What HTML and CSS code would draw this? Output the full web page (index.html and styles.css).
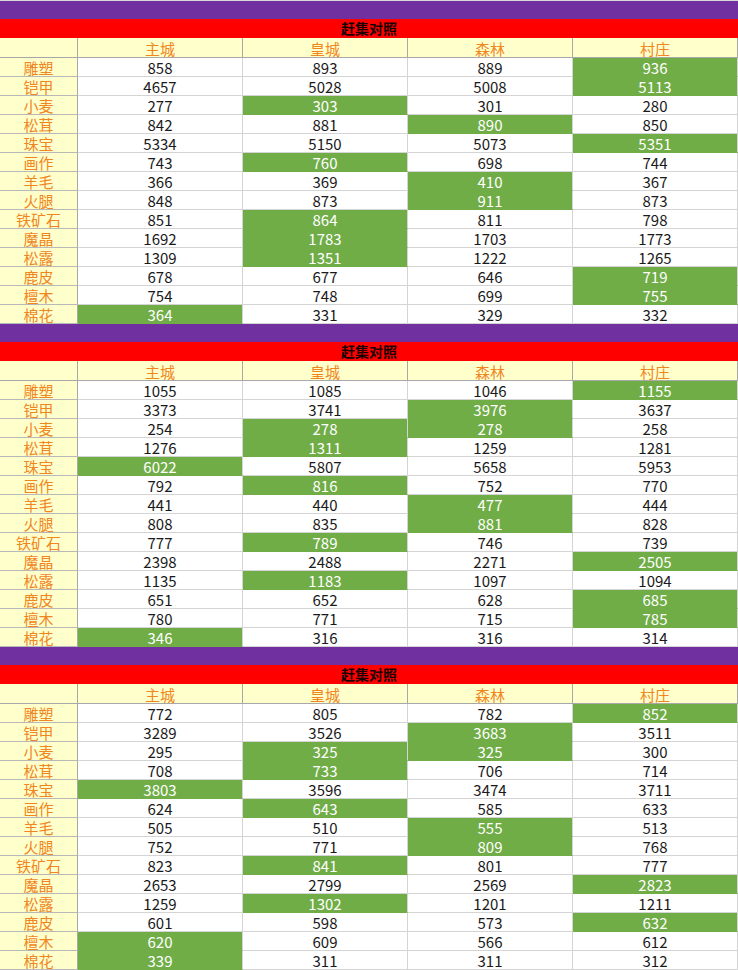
FILE: index.html
```html
<!DOCTYPE html>
<html lang="zh">
<head>
<meta charset="utf-8">
<title>赶集对照</title>
<link rel="stylesheet" href="styles.css">
</head>
<body>
<div class="sheet">

<section class="block">
  <div class="band-purple"></div>
  <div class="band-title">赶集对照</div>
  <div class="grid">
    <div class="cell hd"></div><div class="cell hd">主城</div><div class="cell hd">皇城</div><div class="cell hd">森林</div><div class="cell hd">村庄</div>
    <div class="cell lbl">雕塑</div><div class="cell">858</div><div class="cell">893</div><div class="cell">889</div><div class="cell hi">936</div>
    <div class="cell lbl">铠甲</div><div class="cell">4657</div><div class="cell">5028</div><div class="cell">5008</div><div class="cell hi">5113</div>
    <div class="cell lbl">小麦</div><div class="cell">277</div><div class="cell hi">303</div><div class="cell">301</div><div class="cell">280</div>
    <div class="cell lbl">松茸</div><div class="cell">842</div><div class="cell">881</div><div class="cell hi">890</div><div class="cell">850</div>
    <div class="cell lbl">珠宝</div><div class="cell">5334</div><div class="cell">5150</div><div class="cell">5073</div><div class="cell hi">5351</div>
    <div class="cell lbl">画作</div><div class="cell">743</div><div class="cell hi">760</div><div class="cell">698</div><div class="cell">744</div>
    <div class="cell lbl">羊毛</div><div class="cell">366</div><div class="cell">369</div><div class="cell hi">410</div><div class="cell">367</div>
    <div class="cell lbl">火腿</div><div class="cell">848</div><div class="cell">873</div><div class="cell hi">911</div><div class="cell">873</div>
    <div class="cell lbl">铁矿石</div><div class="cell">851</div><div class="cell hi">864</div><div class="cell">811</div><div class="cell">798</div>
    <div class="cell lbl">魔晶</div><div class="cell">1692</div><div class="cell hi">1783</div><div class="cell">1703</div><div class="cell">1773</div>
    <div class="cell lbl">松露</div><div class="cell">1309</div><div class="cell hi">1351</div><div class="cell">1222</div><div class="cell">1265</div>
    <div class="cell lbl">鹿皮</div><div class="cell">678</div><div class="cell">677</div><div class="cell">646</div><div class="cell hi">719</div>
    <div class="cell lbl">檀木</div><div class="cell">754</div><div class="cell">748</div><div class="cell">699</div><div class="cell hi">755</div>
    <div class="cell lbl">棉花</div><div class="cell hi">364</div><div class="cell">331</div><div class="cell">329</div><div class="cell">332</div>
  </div>
</section>

<section class="block">
  <div class="band-purple"></div>
  <div class="band-title">赶集对照</div>
  <div class="grid">
    <div class="cell hd"></div><div class="cell hd">主城</div><div class="cell hd">皇城</div><div class="cell hd">森林</div><div class="cell hd">村庄</div>
    <div class="cell lbl">雕塑</div><div class="cell">1055</div><div class="cell">1085</div><div class="cell">1046</div><div class="cell hi">1155</div>
    <div class="cell lbl">铠甲</div><div class="cell">3373</div><div class="cell">3741</div><div class="cell hi">3976</div><div class="cell">3637</div>
    <div class="cell lbl">小麦</div><div class="cell">254</div><div class="cell hi">278</div><div class="cell hi">278</div><div class="cell">258</div>
    <div class="cell lbl">松茸</div><div class="cell">1276</div><div class="cell hi">1311</div><div class="cell">1259</div><div class="cell">1281</div>
    <div class="cell lbl">珠宝</div><div class="cell hi">6022</div><div class="cell">5807</div><div class="cell">5658</div><div class="cell">5953</div>
    <div class="cell lbl">画作</div><div class="cell">792</div><div class="cell hi">816</div><div class="cell">752</div><div class="cell">770</div>
    <div class="cell lbl">羊毛</div><div class="cell">441</div><div class="cell">440</div><div class="cell hi">477</div><div class="cell">444</div>
    <div class="cell lbl">火腿</div><div class="cell">808</div><div class="cell">835</div><div class="cell hi">881</div><div class="cell">828</div>
    <div class="cell lbl">铁矿石</div><div class="cell">777</div><div class="cell hi">789</div><div class="cell">746</div><div class="cell">739</div>
    <div class="cell lbl">魔晶</div><div class="cell">2398</div><div class="cell">2488</div><div class="cell">2271</div><div class="cell hi">2505</div>
    <div class="cell lbl">松露</div><div class="cell">1135</div><div class="cell hi">1183</div><div class="cell">1097</div><div class="cell">1094</div>
    <div class="cell lbl">鹿皮</div><div class="cell">651</div><div class="cell">652</div><div class="cell">628</div><div class="cell hi">685</div>
    <div class="cell lbl">檀木</div><div class="cell">780</div><div class="cell">771</div><div class="cell">715</div><div class="cell hi">785</div>
    <div class="cell lbl">棉花</div><div class="cell hi">346</div><div class="cell">316</div><div class="cell">316</div><div class="cell">314</div>
  </div>
</section>

<section class="block">
  <div class="band-purple"></div>
  <div class="band-title">赶集对照</div>
  <div class="grid">
    <div class="cell hd"></div><div class="cell hd">主城</div><div class="cell hd">皇城</div><div class="cell hd">森林</div><div class="cell hd">村庄</div>
    <div class="cell lbl">雕塑</div><div class="cell">772</div><div class="cell">805</div><div class="cell">782</div><div class="cell hi">852</div>
    <div class="cell lbl">铠甲</div><div class="cell">3289</div><div class="cell">3526</div><div class="cell hi">3683</div><div class="cell">3511</div>
    <div class="cell lbl">小麦</div><div class="cell">295</div><div class="cell hi">325</div><div class="cell hi">325</div><div class="cell">300</div>
    <div class="cell lbl">松茸</div><div class="cell">708</div><div class="cell hi">733</div><div class="cell">706</div><div class="cell">714</div>
    <div class="cell lbl">珠宝</div><div class="cell hi">3803</div><div class="cell">3596</div><div class="cell">3474</div><div class="cell">3711</div>
    <div class="cell lbl">画作</div><div class="cell">624</div><div class="cell hi">643</div><div class="cell">585</div><div class="cell">633</div>
    <div class="cell lbl">羊毛</div><div class="cell">505</div><div class="cell">510</div><div class="cell hi">555</div><div class="cell">513</div>
    <div class="cell lbl">火腿</div><div class="cell">752</div><div class="cell">771</div><div class="cell hi">809</div><div class="cell">768</div>
    <div class="cell lbl">铁矿石</div><div class="cell">823</div><div class="cell hi">841</div><div class="cell">801</div><div class="cell">777</div>
    <div class="cell lbl">魔晶</div><div class="cell">2653</div><div class="cell">2799</div><div class="cell">2569</div><div class="cell hi">2823</div>
    <div class="cell lbl">松露</div><div class="cell">1259</div><div class="cell hi">1302</div><div class="cell">1201</div><div class="cell">1211</div>
    <div class="cell lbl">鹿皮</div><div class="cell">601</div><div class="cell">598</div><div class="cell">573</div><div class="cell hi">632</div>
    <div class="cell lbl">檀木</div><div class="cell hi">620</div><div class="cell">609</div><div class="cell">566</div><div class="cell">612</div>
    <div class="cell lbl">棉花</div><div class="cell hi">339</div><div class="cell">311</div><div class="cell">311</div><div class="cell">312</div>
  </div>
</section>

</div>
</body>
</html>
```

FILE: styles.css
```css
html, body {
  margin: 0;
  padding: 0;
  background: #ffffff;
}

.sheet {
  width: 738px;
  padding-top: 1px;
  background: #d8d8d8;
  font-family: "Noto Sans CJK SC", "Noto Sans", sans-serif;
  overflow: hidden;
}

.block {
  display: flex;
  flex-direction: column;
}

.band-purple {
  height: 18px;
  background: #7030a0;
}

.band-title {
  height: 19px;
  background: #ff0000;
  color: #1a0000;
  font-size: 14px;
  font-weight: bold;
  line-height: 19px;
  text-align: center;
}

.grid {
  display: grid;
  grid-template-columns: 78px repeat(4, 165px);
  grid-template-rows: 20px;
  grid-auto-rows: 19px;
  background: #ffffff;
}

.cell {
  box-sizing: border-box;
  padding-top: 1px;
  border-right: 1px solid #d4d4d4;
  border-bottom: 1px solid #d4d4d4;
  font-size: 15px;
  line-height: 18px;
  text-align: center;
  color: #1a1a1a;
  background: #ffffff;
  white-space: nowrap;
}

.hd {
  height: 20px;
  line-height: 19px;
  background: #ffffcc;
  color: #f0861e;
  border-color: #a8a8a8;
}

.lbl {
  background: #ffffcc;
  color: #f0861e;
  border-right-color: #a8a8a8;
  border-bottom-color: #b8b8b8;
}

.hi {
  background: #70ad47;
  color: #ffffff;
  border-right-color: #d4d4d4;
  border-bottom-color: #70ad47;
}
```
